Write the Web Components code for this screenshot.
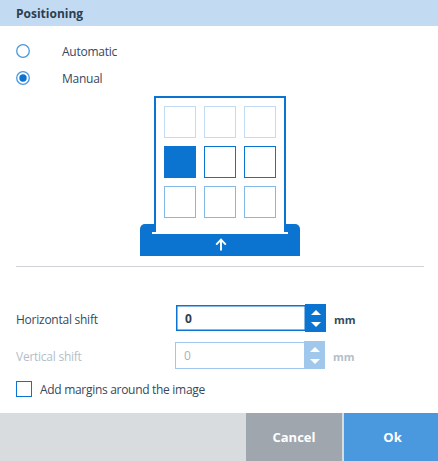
<!doctype html>
<html><head><meta charset="utf-8"><style>
html,body{margin:0;padding:0;background:#fff}
body{width:438px;height:461px;overflow:hidden;font:12px "Open Sans","Noto Sans",sans-serif;color:#2c3e50}
</style></head><body>
<position-dialog></position-dialog>
<script>
class Base extends HTMLElement{constructor(){super();this.attachShadow({mode:'open'})}}
customElements.define('radio-row',class extends Base{connectedCallback(){const c=this.hasAttribute('checked');this.shadowRoot.innerHTML=`<style>
:host{display:flex;align-items:center;height:27px;padding-left:16px}
svg{display:block;width:14px;height:14px;flex:none}
span{margin-left:32px;padding-top:1px;font-size:12px;letter-spacing:-.25px;color:#34495e}
</style><svg viewBox="0 0 14 14"><circle cx="7" cy="7" r="6.3" fill="#fff" stroke="#4a98e0" stroke-width="1.3"/>${c?'<circle cx="7" cy="7" r="3.7" fill="#0a74d0"/>':''}</svg><span><slot></slot></span>`}});
customElements.define('position-grid',class extends Base{connectedCallback(){
const cls=['a','a','a','s','d','d','b','b','b'];
this.shadowRoot.innerHTML=`<style>
:host{display:flex;padding-left:140px;height:160px}
.wrap{width:160px;display:flex;flex-direction:column;align-items:center;position:relative}
.page{box-sizing:border-box;width:132px;height:136px;border:2px solid #0a74d0;border-bottom:0;background:#fff;padding:8px 8px 0;display:grid;grid-template-columns:repeat(3,32px);grid-auto-rows:32px;gap:8px;position:relative;z-index:1}
.c{box-sizing:border-box;border:1px solid}
.a{border-color:#c2dbf3}.b{border-color:#84b9e7}.d{border-color:#0a74d0}.s{background:#0a74d0;border-color:#0a74d0}
.tray{width:160px;height:32px;margin-top:-8px;background:#0a74d0;border-radius:5px 5px 0 0;display:flex;flex-direction:column;align-items:center}
.line{width:136px;height:2px;background:#fff;margin-top:8px;flex:none}
svg{display:block;margin:4px 0 0 2px;width:12px;height:13px}
</style><div class="wrap"><div class="page">${cls.map(c=>`<div class="c ${c}"></div>`).join('')}</div>
<div class="tray"><div class="line"></div><svg viewBox="0 0 12 13"><path d="M6 12.5V2M1.2 6.6L6 1.6 10.8 6.6" fill="none" stroke="#fff" stroke-width="1.9"/></svg></div></div>`}});
customElements.define('shift-field',class extends Base{connectedCallback(){const d=this.hasAttribute('disabled');
this.shadowRoot.innerHTML=`<style>
:host{display:flex;align-items:center;height:28px;padding-left:16px}
label{width:${d?159:160}px;padding-top:2px;font-size:12px;letter-spacing:-.25px;color:${d?'#b4bec8':'#34495e'}}
.box{box-sizing:border-box;width:130px;height:27px;border:${d?'1px solid #a0c8ec':'1px solid #0a74d0'};${d?'':'box-shadow:inset 0 0 0 .5px #0a74d0;height:26px;'}background:#fff;padding-left:8px;display:flex;align-items:center;font-weight:${d?400:700};font-size:12px;color:${d?'#a8b2bc':'#2c3e50'}}
.spin{box-sizing:border-box;width:21px;height:28px;margin-left:-1px;background:${d?'#a0c8ec':'#0a74d0'};display:flex;flex-direction:column;align-items:center;justify-content:center;gap:7px}
.up,.dn{width:0;height:0;border-left:5px solid transparent;border-right:5px solid transparent}
.up{border-bottom:5px solid #fff}.dn{border-top:5px solid #fff}
.u{margin-left:8px;padding-top:2px;font-size:11px;font-weight:700;color:${d?'#b4bec8':'#34495e'}}
</style><label><slot></slot></label><div class="box">0</div><div class="spin"><div class="up"></div><div class="dn"></div></div><span class="u">mm</span>`}});
customElements.define('check-row',class extends Base{connectedCallback(){this.shadowRoot.innerHTML=`<style>
:host{display:flex;align-items:center;height:16px;padding-left:16px}
i{box-sizing:border-box;display:block;width:16px;height:16px;border:1px solid #0a74d0;background:#fff}
span{margin-left:8px;font-size:12px;letter-spacing:-.3px;color:#34495e}
</style><i></i><span><slot></slot></span>`}});
customElements.define('dialog-button',class extends Base{connectedCallback(){const p=this.hasAttribute('primary');this.shadowRoot.innerHTML=`<style>
:host{box-sizing:border-box;display:flex;align-items:center;justify-content:center;height:48px;width:${p?94:96}px;padding-left:${p?3:0}px;background:${p?'#4a98de':'#a0a6ae'};color:#fff;font-size:13px;font-weight:700}
</style><slot></slot>`}});
customElements.define('position-dialog',class extends Base{connectedCallback(){this.shadowRoot.innerHTML=`<style>
:host{display:flex;flex-direction:column;width:438px;height:461px;background:#fff}
header{height:26px;background:#c2dbf3;padding-left:16px;display:flex;align-items:center;font-size:12px;font-weight:700;color:#2c3e50}
.radios{margin-top:11px}
position-grid{margin-top:5px}
hr{border:0;height:1px;background:#cfd2d4;margin:10px 14px 0 16px}
.f1{margin-top:37px}.f2{margin-top:9px}
check-row{margin-top:12px}
footer{margin-top:16px;height:48px;background:#d8dcde;display:flex;justify-content:flex-end;gap:2px}
</style><header>Positioning</header>
<div class="radios"><radio-row>Automatic</radio-row><radio-row checked>Manual</radio-row></div>
<position-grid></position-grid><hr>
<shift-field class="f1">Horizontal shift</shift-field><shift-field class="f2" disabled>Vertical shift</shift-field>
<check-row>Add margins around the image</check-row>
<footer><dialog-button>Cancel</dialog-button><dialog-button primary>Ok</dialog-button></footer>`}});
</script></body></html>
